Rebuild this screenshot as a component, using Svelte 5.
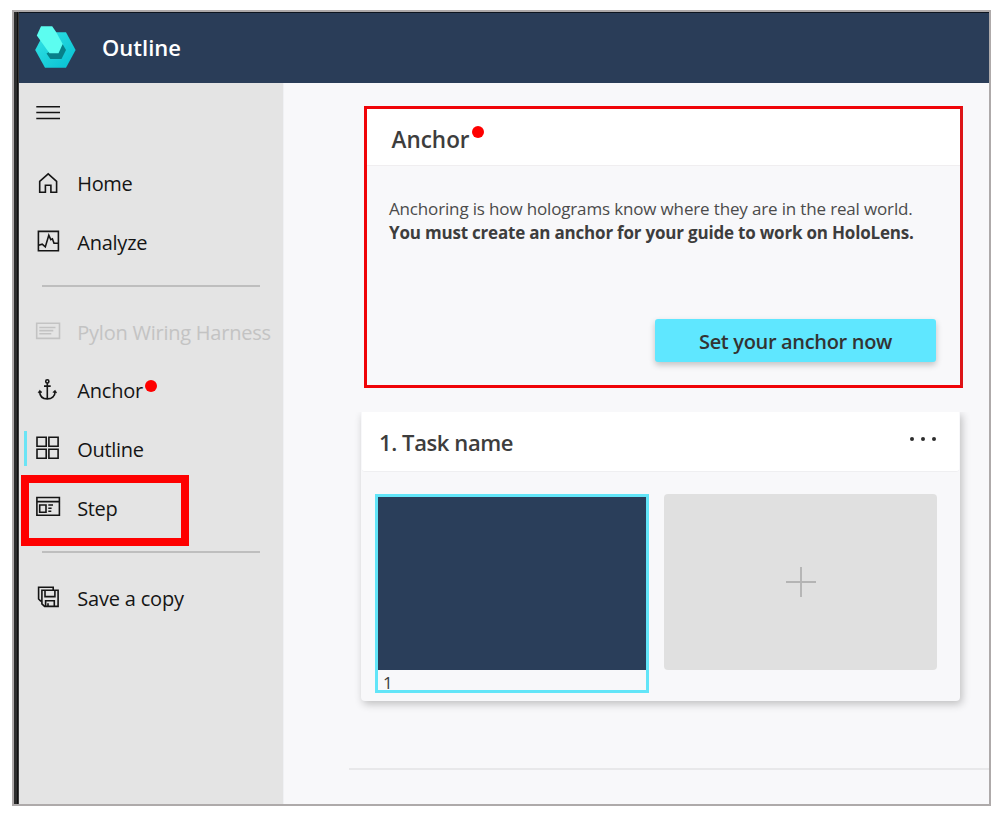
<script>
  const guide = [
    { id: 'home', label: 'Home', top: 170, spacing: -0.4 },
    { id: 'analyze', label: 'Analyze', top: 229, spacing: -0.25 }
  ];
  const authoring = [
    { id: 'pylon', label: 'Pylon Wiring Harness', top: 318, spacing: -0.24, disabled: true },
    { id: 'anchor', label: 'Anchor', top: 377, spacing: -0.2, alert: true },
    { id: 'outline', label: 'Outline', top: 436, spacing: -0.3, active: true },
    { id: 'step', label: 'Step', top: 495, spacing: -0.4, marked: true }
  ];
  const file = [{ id: 'save', label: 'Save a copy', top: 584, spacing: -0.2 }];
  const groups = [guide, authoring, file];
</script>

<div class="page">
  <div class="window">
    <div class="edge"></div>
    <div class="app">
      <header>
        <svg class="logo" viewBox="34 25 43 45" width="43" height="45">
          <defs>
            <linearGradient id="hex" x1="0" y1="0" x2="1" y2="1">
              <stop offset="0" stop-color="#35e3e6" />
              <stop offset="0.45" stop-color="#1fd3dc" />
              <stop offset="1" stop-color="#05bfd2" />
            </linearGradient>
          </defs>
          <path d="M44.5 32.3H66L75.6 50L66 67.8H45L35.2 50Z" fill="url(#hex)" />
          <path d="M46.5 53.5L50.3 59H61.5L66 50L62.5 44Z" fill="#078089" />
          <path d="M41 26.2H52.2L55.8 31.5L62.7 44L58.5 53.2H49.5L36.8 35.5Z" fill="#5cfdf0" />
        </svg>
        <h1>Outline</h1>
      </header>
      <div class="body">
        <nav>
          <div class="menu">
            <svg viewBox="36 105 25 16" width="25" height="16">
              <path d="M36.3 106.7H60M36.3 112.6H60M36.3 118.5H60" stroke="#151515" stroke-width="1.5" />
            </svg>
          </div>
          {#each groups as group, g}
            {#if g > 0}<div class="rule"><i></i></div>{/if}
            {#each group as item}
              <div class="item {item.id}" class:disabled={item.disabled}>
                {#if item.active}<span class="bar"></span>{/if}
                <svg class="icon" viewBox="35 {item.top} 26 27" width="26" height="27">
                  {#if item.id === 'home'}
                    <path d="M39.7 192.2V181.4L48.2 173.9L56.6 181.4V192.2H50.9V185.2H45.4V192.2Z" />
                  {:else if item.id === 'analyze'}
                    <path d="M38.4 231.4H58.4V250.7H38.4Z" />
                    <path d="M38.5 245.3L42.2 244.2L45.3 246.9L48.8 235.3L50.8 239.6L52.4 238.8L54 243.2H58" />
                  {:else if item.id === 'pylon'}
                    <path d="M36.7 323.3H59.5V338.4H36.7Z" />
                    <path d="M39.3 327.5H55.5M39.3 330.6H53.3M39.3 333.8H51.3" />
                  {:else if item.id === 'anchor'}
                    <circle cx="47.3" cy="381.4" r="1.6" />
                    <path d="M47.3 383V398.8M44 386.1H50.7M39.7 391.5C39.7 396.5 43 398.9 47.3 398.9S55.1 396.5 55.1 391.5" />
                    <path d="M38.1 392.8L39.7 390.2L42 392.3ZM56.7 392.8L55.1 390.2L52.8 392.3Z" fill="currentColor" stroke-width=".6" />
                  {:else if item.id === 'outline'}
                    <path d="M37 437.2H46.2V446.2H37ZM48.9 437.2H58.1V446.2H48.9ZM37 449.3H46.2V458.3H37ZM48.9 449.3H58.1V458.3H48.9Z" />
                  {:else if item.id === 'step'}
                    <path d="M36.9 497.5H59.4V515.3H36.9ZM36.9 501.6H59.4M39.7 505H46V512.2H39.7ZM48.3 505H53M48.3 508.2H51.6M48.3 511.2H51.3" />
                  {:else}
                    <path d="M41 601.4L38.6 599V587.3H53.2V590M41.9 590.2H58.1V606.4H44.6L41.9 603.9ZM45 590.2V596.6H54.9V590.2M45.6 606.4V600.8H54.3V606.4M48 606.4V603.3" />
                  {/if}
                </svg>
                <span class="label" style="letter-spacing:{item.spacing}px">{item.label}{#if item.alert}<b class="alert"></b>{/if}</span>
                {#if item.marked}<span class="mark"></span>{/if}
              </div>
            {/each}
          {/each}
        </nav>
        <main>
          <section class="anchor-card">
            <div class="card-head"><h2 class="anchor-title">Anchor<b class="alert"></b></h2></div>
            <div class="card-body">
              <p class="line">Anchoring is how holograms know where they are in the real world.</p>
              <p class="line strong">You must create an anchor for your guide to work on HoloLens.</p>
              <button><span>Set your anchor now</span></button>
            </div>
          </section>
          <div class="clip">
            <section class="task-card">
              <div class="task-head">
                <h2 class="task-title">1. Task name</h2>
                <svg viewBox="0 0 28 6" width="28" height="6" fill="#2d2d2d">
                  <circle cx="3" cy="3" r="2" /><circle cx="14" cy="3" r="2" /><circle cx="25" cy="3" r="2" />
                </svg>
              </div>
              <div class="steps">
                <div class="thumb"><div class="preview"></div><span>1</span></div>
                <div class="add">
                  <svg viewBox="0 0 30 30" width="30" height="30"><path d="M0 15H30M15 0V30" stroke="#b4b4b4" stroke-width="1.9" /></svg>
                </div>
              </div>
            </section>
          </div>
          <div class="footer-rule"></div>
        </main>
      </div>
    </div>
  </div>
</div>

<style>
  :global(body) { background: #fff; }
  * { box-sizing: border-box; }
  .page {
    width: 1005px; height: 821px; padding: 10px 14px 15px 12px;
    font-family: "Open Sans", "Noto Sans", sans-serif; background: #fff; color: #151515;
  }
  .window { width: 979px; height: 796px; border: 2px solid #aeaaaa; display: flex; overflow: hidden; }
  .edge { width: 5px; background: linear-gradient(90deg, #2d2d2d 0 3px, #111 3px 4px, #3a3a3a 4px); }
  .app { flex: 1; display: flex; flex-direction: column; }
  header {
    height: 70.5px; background: #2a3d58; border-top: 1px solid #0d141e;
    display: flex; align-items: center; padding-left: 15px; flex: none;
  }
  .logo { margin-bottom: 1px; }
  h1, h2, p { margin: 0; }
  h1 { color: #fff; font-size: 22px; font-weight: 600; line-height: 30px; margin: 0 0 1px 25px; }
  .body { flex: 1; display: flex; min-height: 0; }
  nav { width: 264px; background: #e4e4e4; flex: none; }
  .menu { height: 71.5px; padding: 22.5px 0 0 17px; }
  .menu svg { display: block; }
  .item { height: 59px; display: flex; align-items: center; padding-left: 16px; position: relative; }
  .icon { fill: none; stroke: currentColor; stroke-width: 1.6; flex: none; }
  .label { margin-left: 16.3px; font-size: 20px; line-height: 28px; white-space: nowrap; position: relative; }
  .pylon .label, .save .label { margin-top: 2px; }
  .disabled { color: #c3c3c3; }
  .bar { position: absolute; left: 5.4px; top: 11px; width: 3px; height: 35px; background: #6be4f5; }
  .alert { position: absolute; width: 12px; height: 12px; border-radius: 50%; background: #fe0000; }
  .label .alert { left: 68px; top: 3px; }
  .mark { position: absolute; left: 2px; top: -4px; width: 168px; height: 71px; border: 8px solid #fe0000; }
  .rule { height: 30px; padding: 13px 23px 0; }
  .rule i { display: block; height: 2px; background: #bebebe; }
  main { flex: 1; background: #f8f8fa; padding: 23.5px 0 0 65px; border-left: 1px solid #f0f1f4; }
  .anchor-card { width: 599px; height: 282px; margin-left: 15px; border: 3px solid #f00408; border-right-color: #dc1518; background: #f8f8fa; }
  .card-head { height: 57px; background: #fff; border-bottom: 1px solid #f0eef0; padding: 16px 0 0 24.5px; }
  h2 { font-size: 22.5px; font-weight: 600; line-height: 30px; color: #3d3d3d; position: relative; white-space: nowrap; }
  .anchor-title .alert { left: 80.5px; top: 1px; }
  .task-title { font-size: 22px; letter-spacing: -.4px; margin-top: 1px; }
  .card-body { padding: 31px 24px 0 22px; display: flex; flex-direction: column; }
  .line { font-size: 17px; line-height: 24px; letter-spacing: -.155px; color: #4b4b4b; white-space: nowrap; }
  .strong { font-weight: 700; letter-spacing: -.2px; color: #3d3d3d; }
  button {
    align-self: flex-end; margin-top: 74px; width: 281px; height: 43px; border: 0; border-radius: 3px; padding: 2px 0 0;
    background: #5fe7ff; color: #333; font: 600 20px/28px "Open Sans", "Noto Sans", sans-serif; letter-spacing: -.33px;
    box-shadow: 0 3px 6px rgba(0, 0, 0, .22);
  }
  .clip { overflow: hidden; margin: 24px 0 0 -10px; padding: 0 0 40px 22px; }
  .task-card { width: 599px; height: 289px; background: #f8f8fa; border-radius: 0 0 4px 4px; box-shadow: 2px 3px 9px rgba(0, 0, 0, .24); }
  .task-head {
    height: 60px; margin: 0 1px; padding: 0 21.7px 0 17px; background: #fff; border-radius: 0 0 3px 3px;
    border-bottom: 1px solid #efeff1; display: flex; align-items: center; justify-content: space-between;
  }
  .task-head svg { margin-bottom: 5px; }
  .steps { display: flex; gap: 15px; padding: 22px 0 0 14px; align-items: flex-start; }
  .thumb { width: 274px; height: 199px; border: 3px solid #62e5f8; }
  .preview { height: 173px; background: #2a3e5a; }
  .thumb span { display: block; padding-left: 5px; font-size: 17px; line-height: 24px; margin-top: 1px; height: 19px; color: #3d3d3d; }
  .add { width: 273px; height: 176px; border-radius: 4px; background: #e0e0e0; display: flex; align-items: center; justify-content: center; }
  .footer-rule { height: 1.5px; background: #e8e8ea; margin-top: 27px; }
</style>
